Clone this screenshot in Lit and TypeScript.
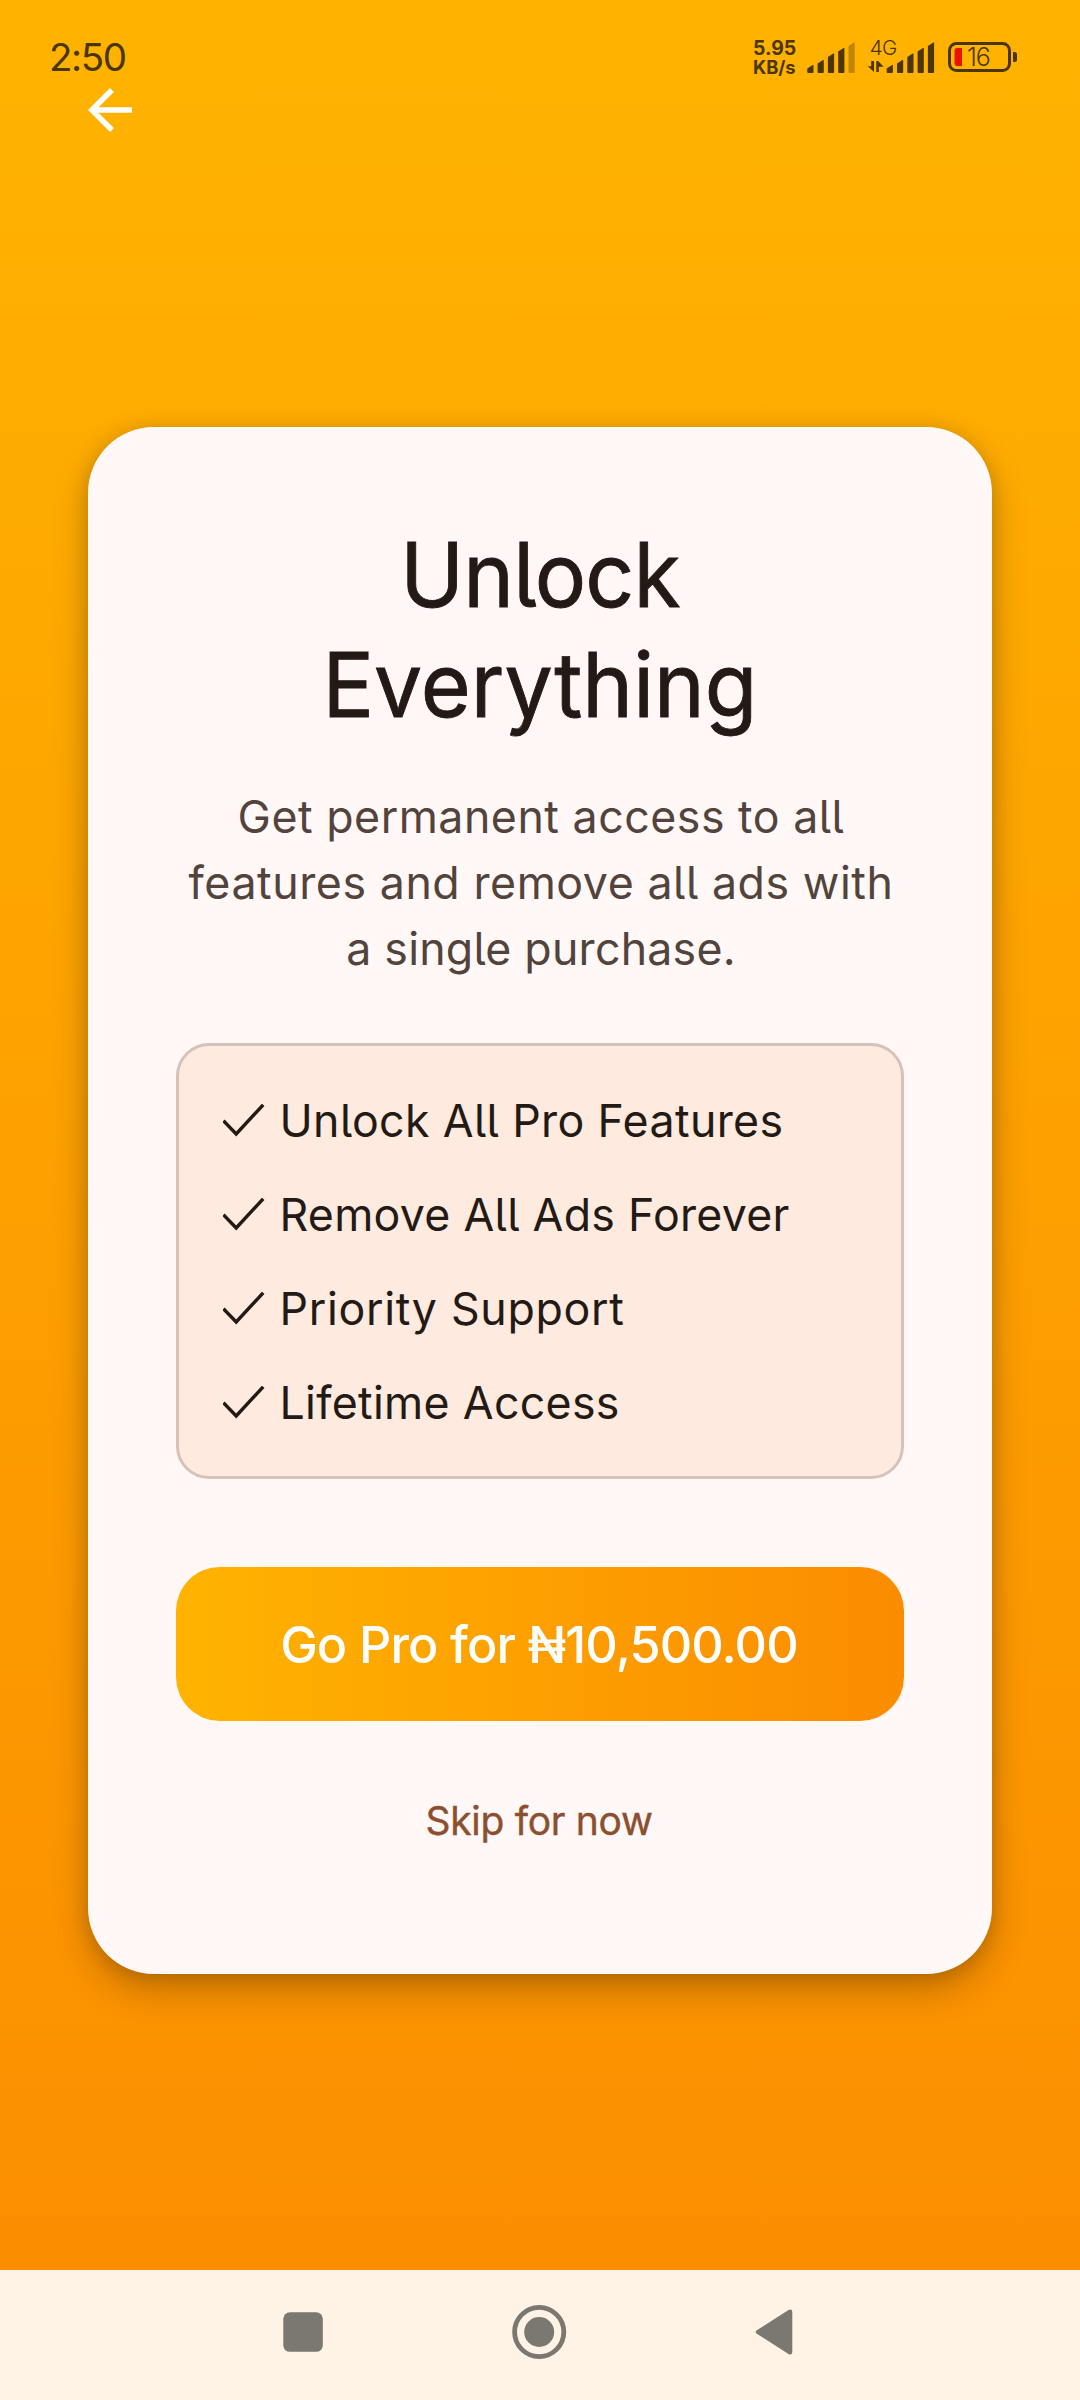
import { LitElement, html, css, svg } from "lit";
import { customElement } from "lit/decorators.js";

const INK = "#4b3500";

@customElement("status-bar")
class StatusBar extends LitElement {
  static styles = css`
    :host { display: flex; height: 80px; padding: 0 63px 0 49px; justify-content: space-between; color: #4b3500; font-family: Inter, "Noto Sans", sans-serif; box-sizing: border-box; }
    .time { font-size: 38.5px; line-height: 40px; letter-spacing: -1.4px; padding-top: 37px; }
    .right { display: flex; align-items: flex-start; }
    .speed { width: 54px; padding-top: 39px; font-weight: 700; font-size: 19.4px; line-height: 19px; letter-spacing: 0; }
    .unit { font-size: 18.4px; letter-spacing: -0.1px; }
    .icon { display: block; }
    .pct { font: 300 25px Inter, sans-serif; letter-spacing: -1px; }
  `;

  bars(x: number, pitch: number, base: number, faded: boolean) {
    const heights = [8, 13, 19.5, 25, 30.5];
    return heights.map((h, i) => {
      const l = x + i * pitch;
      return svg`<path d=${`M${l} ${base - h + 3.4}L${l + 5.4} ${base - h}H${l + 6.2}V${base - 1}Q${l + 6.2} ${base} ${l + 5.2} ${base}H${l + 1}Q${l} ${base} ${l} ${base - 1}Z`} fill=${INK} opacity=${faded && i === 4 ? 0.35 : 1}></path>`;
    });
  }

  render() {
    return html`
      <div class="time">2:50</div>
      <div class="right">
        <div class="speed"><div>5.95</div><div class="unit">KB/s</div></div>
        <svg class="icon" width="61" height="80" viewBox="807 0 61 80">${this.bars(807.3, 10.3, 73, true)}</svg>
        <svg class="icon" width="80" height="80" viewBox="868 0 80 80">
          <text x="869.8" y="55.2" font-size="20.5" font-weight="300" letter-spacing="-0.8" fill=${INK}>4G</text>
          <path d="M874 61V72L867.8 66.3H871.2V61ZM876.3 61V72H878.8V66.8H883.6L878.2 61Z" fill=${INK}></path>
          ${this.bars(886.7, 10.3, 73, false)}
        </svg>
        <svg class="icon" width="69" height="80" viewBox="948 0 69 80">
          <rect x="949.5" y="43.5" width="60" height="27" rx="7" fill="none" stroke=${INK} stroke-width="3"></rect>
          <path d="M1013 52H1014.5Q1017 52 1017 54.5V59.5Q1017 62 1014.5 62H1013Z" fill=${INK}></path>
          <path d="M957 48H962V66H957Q954.5 66 954.5 63V51Q954.5 48 957 48Z" fill="#e81200"></path>
          <text class="pct" x="967" y="66" fill=${INK}>16</text>
        </svg>
      </div>
    `;
  }
}

@customElement("feature-row")
class FeatureRow extends LitElement {
  static properties = { label: {}, tracking: { type: Number } };
  declare label: string;
  declare tracking: number;
  static styles = css`
    :host { display: flex; align-items: center; height: 66px; color: #231a15; }
    .check { display: block; flex: none; margin-right: 15px; }
    .label { font-size: 44.7px; line-height: 66px; white-space: nowrap; }
  `;
  render() {
    return html`
      <svg class="check" width="42" height="34" viewBox="0 0 42 34">
        <path d="M0.4 16.8L13.2 30L40.2 0.8" fill="none" stroke="#231a15" stroke-width="3.4"></path>
      </svg>
      <span class="label" style="letter-spacing:${this.tracking}px">${this.label}</span>
    `;
  }
}

@customElement("nav-bar")
class NavBar extends LitElement {
  static styles = css`
    :host { display: block; height: 130px; background: #fff3e5; }
    .icons { display: block; }
  `;
  render() {
    return html`
      <svg class="icons" width="1080" height="130" viewBox="0 0 1080 130" fill="#7b7771">
        <rect x="283.3" y="42.3" width="39.5" height="39.5" rx="6.5"></rect>
        <circle cx="539.2" cy="62" r="24.6" fill="none" stroke="#7b7771" stroke-width="4.8"></circle>
        <circle cx="539.2" cy="62" r="15"></circle>
        <path d="M757.2 60L788.5 40Q792.3 38.2 792.3 42.5V81.5Q792.3 85.8 788.5 84L757.2 64Q754 62 757.2 60Z"></path>
      </svg>
    `;
  }
}

const FEATURES: [string, number][] = [
  ["Unlock All Pro Features", 0.36],
  ["Remove All Ads Forever", 0.27],
  ["Priority Support", 0.69],
  ["Lifetime Access", 0.3],
];

@customElement("app-root")
class AppRoot extends LitElement {
  static styles = css`
    :host {
      display: flex; flex-direction: column; width: 1080px; height: 2400px;
      font-family: Inter, "Noto Sans", sans-serif;
      font-feature-settings: "cv05";
      background: linear-gradient(180deg, #ffb300 0%, #fb8c00 100%);
    }
    .toolbar { height: 347px; }
    .back { display: block; margin: -3px 0 0 77px; }
    .card {
      box-sizing: border-box; height: 1547px; margin: 0 88px; padding: 92.5px 88px 0;
      border-radius: 66px; background: #fff8f6;
      box-shadow: 0 16px 36px rgba(0, 0, 0, 0.24), 0 2px 18px rgba(0, 0, 0, 0.13);
      display: flex; flex-direction: column;
    }
    .title { margin: 0; font-weight: 400; font-size: 89.4px; line-height: 110px; color: #231a15; text-align: center; -webkit-text-stroke: 0.9px #231a15; }
    .line { display: block; white-space: nowrap; }
    .t1 { transform: scaleX(0.96); letter-spacing: -0.9px; }
    .t2 { transform: scaleX(0.96); letter-spacing: 0.1px; }
    .desc { margin: 44px -20px 0; padding-left: 2px; font-size: 44.7px; line-height: 66px; color: #52443c; text-align: center; }
    .d1 { letter-spacing: 0.51px; }
    .d2 { letter-spacing: 0.56px; }
    .d3 { letter-spacing: 0.22px; }
    .features {
      box-sizing: border-box; height: 436px; margin-top: 61px; padding: 3px 0 0 43.5px;
      border: 3px solid #d7c2b9; border-radius: 33px; background: #feeadf;
      display: flex; flex-direction: column; justify-content: center; gap: 27.9px;
    }
    .buy {
      display: flex; align-items: center; justify-content: center; height: 154px; margin-top: 88px; padding: 2px 2px 0 0;
      border: 0; border-radius: 44px; box-sizing: border-box;
      background: linear-gradient(90deg, #ffb300, #fb8c00);
      color: #fff; font: inherit; font-weight: 500; font-size: 50.3px; letter-spacing: -0.85px;
      font-feature-settings: inherit;
    }
    .skip {
      height: 60px; margin-top: 70.5px; padding: 0 2px 0 0; border: 0; background: none;
      font: inherit; font-size: 39px; font-weight: 400; line-height: 60px; letter-spacing: -0.3px; color: #8b5030;
      -webkit-text-stroke: 0.4px #8b5030;
      font-feature-settings: inherit;
    }
    .fill { flex: 1; }
  `;
  render() {
    return html`
      <status-bar></status-bar>
      <div class="toolbar">
        <svg class="back" width="66" height="66" viewBox="0 0 24 24" fill="#fff">
          <path d="M20 11H7.83l5.59-5.59L12 4l-8 8 8 8 1.41-1.41L7.83 13H20v-2z"></path>
        </svg>
      </div>
      <div class="card">
        <h1 class="title"><span class="line t1">Unlock</span><span class="line t2">Everything</span></h1>
        <div class="desc">
          <span class="line d1">Get permanent access to all</span>
          <span class="line d2">features and remove all ads with</span>
          <span class="line d3">a single purchase.</span>
        </div>
        <div class="features">
          ${FEATURES.map(([t, s]) => html`<feature-row .label=${t} .tracking=${s}></feature-row>`)}
        </div>
        <button class="buy">Go Pro for ₦10,500.00</button>
        <button class="skip">Skip for now</button>
      </div>
      <div class="fill"></div>
      <nav-bar></nav-bar>
    `;
  }
}
